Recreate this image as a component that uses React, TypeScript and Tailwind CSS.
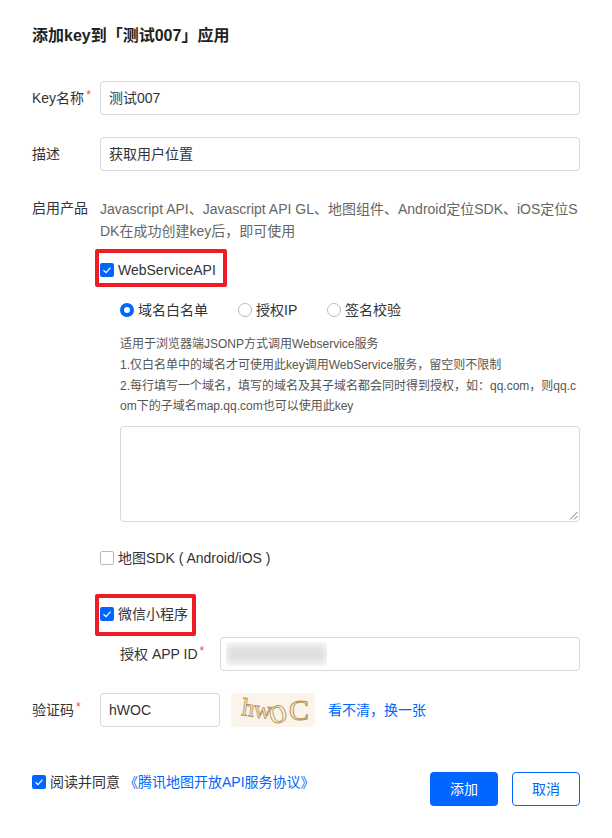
import { ReactNode } from "react";

const COMMA = "\uFF0C";
const COLON = "\uFF1A";

const Check = ({ checked }: { checked?: boolean }) =>
  checked ? (
    <span className="flex h-[14px] w-[14px] shrink-0 items-center justify-center rounded-[2px] bg-[#0066ff]">
      <svg width="10" height="10" viewBox="0 0 10 10" fill="none">
        <path d="M1.5 5.2 4 7.6 8.5 2.6" stroke="#fff" strokeWidth="1.2" />
      </svg>
    </span>
  ) : (
    <span className="h-[14px] w-[14px] shrink-0 rounded-[2px] border border-[#bbbbbb] bg-white" />
  );

const Radio = ({ label, on, className }: { label: string; on?: boolean; className: string }) => (
  <div className={"flex items-center gap-1 " + className}>
    {on ? (
      <span className="h-[14px] w-[14px] rounded-full border-[4px] border-[#0066ff] bg-white" />
    ) : (
      <span className="h-[14px] w-[14px] rounded-full border border-[#bbbbbb] bg-white" />
    )}
    <span>{label}</span>
  </div>
);

const Star = () => <span className="relative -top-[4px] ml-[2px] text-[12px] text-[#f5484d]">*</span>;

const Input = ({ value, className }: { value: string; className: string }) => (
  <div className={"flex h-[34px] items-center rounded-[4px] border border-[#d9d9d9] px-2 text-[#333] " + className}>
    {value}
  </div>
);

const Label = ({ children }: { children: ReactNode }) => (
  <div className="w-[68px] shrink-0 text-[#333]">{children}</div>
);

const Captcha = () => (
  <div className="ml-[11px] h-[34px] w-[84px] rounded-[4px] bg-[#faf4ea]">
    <svg className="overflow-visible" width="84" height="34" viewBox="0 0 84 34" fontFamily='"Liberation Serif", serif' fontSize="25" fill="#fbf3e2" stroke="#b8965f" strokeWidth="0.9">
      <text x="10" y="22" transform="rotate(8 10 22)">h</text>
      <text x="22" y="24" transform="rotate(6 22 24)">w</text>
      <text x="41" y="32" transform="rotate(-18 41 32)" fontSize="36">o</text>
      <text x="58" y="27" fontSize="30" strokeWidth="1.1">C</text>
    </svg>
  </div>
);

export default function App() {
  return (
    <div
      className="h-[838px] w-[612px] overflow-hidden bg-white pt-[26px] pl-[32px] pr-[32px] text-[14px] leading-[20px] text-[#333]"
      style={{ fontFamily: '"Liberation Sans", "Noto Sans CJK SC", sans-serif' }}
    >
      <h1 className="text-[16px] font-bold leading-[20px] text-[#222]">添加key到「测试007」应用</h1>

      <div className="mt-[35px] flex items-center">
        <Label>
          Key名称
          <Star />
        </Label>
        <Input value="测试007" className="w-[480px]" />
      </div>

      <div className="mt-[22px] flex items-center">
        <Label>描述</Label>
        <Input value="获取用户位置" className="w-[480px]" />
      </div>

      <div className="mt-[27px] flex">
        <Label>启用产品</Label>
        <div className="w-[480px] break-all leading-[22px] text-[#666]">
          {`Javascript API、Javascript API GL、地图组件、Android定位SDK、iOS定位SDK在成功创建key后${COMMA}即可使用`}
        </div>
      </div>

      <div className="ml-[63px] mt-[7px] flex h-[38px] w-[132px] items-center gap-[4px] rounded-[2px] border-[4px] border-[#ee1c25] pl-px pt-[4px]">
        <Check checked />
        <span>WebServiceAPI</span>
      </div>

      <div className="ml-[88px] w-[460px]">
        <div className="mt-[13px] flex">
          <Radio label="域名白名单" on className="w-[118px]" />
          <Radio label="授权IP" className="w-[89px]" />
          <Radio label="签名校验" className="" />
        </div>
        <div className="mt-[14px] break-all text-[12px] leading-[20px] text-[#555]">
          <p>适用于浏览器端JSONP方式调用Webservice服务</p>
          <p className="mt-[1px]">{`1.仅白名单中的域名才可使用此key调用WebService服务${COMMA}留空则不限制`}</p>
          <p className="mt-[1px]">{`2.每行填写一个域名${COMMA}填写的域名及其子域名都会同时得到授权${COMMA}如${COLON}qq.com${COMMA}则qq.com下的子域名map.qq.com也可以使用此key`}</p>
        </div>
        <div className="relative mt-[10px] h-[96px] rounded-[4px] border border-[#d9d9e0]">
          <svg className="absolute bottom-[1px] right-[1px]" width="9" height="9" viewBox="0 0 9 9" fill="none">
            <path d="M8.5 1 1 8.5M8.5 5 5 8.5" stroke="#777" strokeWidth="1" />
          </svg>
        </div>
      </div>

      <div className="ml-[68px] mt-[26px] flex items-center gap-[4px]">
        <Check />
        <span>地图SDK ( Android/iOS )</span>
      </div>

      <div className="ml-[63px] mt-[26px] flex h-[42px] w-[101px] items-center gap-[4px] rounded-[2px] border-[4px] border-[#ee1c25] pb-[2px] pl-px">
        <Check checked />
        <span>微信小程序</span>
      </div>

      <div className="ml-[88px] mt-px flex items-center">
        <div className="w-[100px] shrink-0">
          授权 APP ID
          <Star />
        </div>
        <div className="flex h-[34px] w-[360px] items-center rounded-[4px] border border-[#d9d9d9] pl-[5px]">
          <div className="h-[24px] w-[101px] overflow-hidden">
            <div className="mt-[2px] h-[20px] bg-[#dfdfdf] blur-[4px]" />
          </div>
        </div>
      </div>

      <div className="mt-[22px] flex items-center">
        <Label>
          验证码
          <Star />
        </Label>
        <Input value="hWOC" className="w-[120px]" />
        <Captcha />
        <span className="ml-[13px] text-[#0066ff]">{`看不清${COMMA}换一张`}</span>
      </div>

      <div className="mt-[45px] flex items-start">
        <div className="flex h-[20px] items-center">
          <Check checked />
          <span className="ml-[4px]">阅读并同意</span>
          <span className="ml-[4px] text-[#0066ff]">《腾讯地图开放API服务协议》</span>
        </div>
        <div className="ml-auto flex gap-[14px]">
          <button className="h-[34px] w-[68px] rounded-[4px] bg-[#0066ff] text-white">添加</button>
          <button className="h-[34px] w-[68px] rounded-[4px] border border-[#0066ff] text-[#0066ff]">取消</button>
        </div>
      </div>
    </div>
  );
}
